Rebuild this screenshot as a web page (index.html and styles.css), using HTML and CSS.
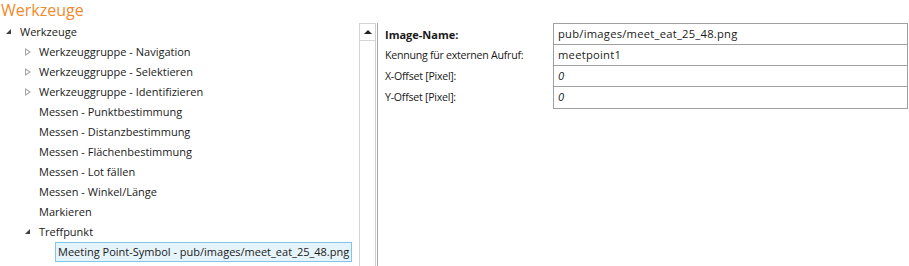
FILE: index.html
```html
<!DOCTYPE html>
<html>
<head>
    <title>Werkzeuge</title>
    <link rel="stylesheet" href="styles.css">
</head>
<body>
    <div class="title">Werkzeuge</div>
    <div class="main">
        <div class="tree">
            <div class="node lvl0"><span class="arrow open"></span>Werkzeuge</div>
            <div class="node lvl1"><span class="arrow closed"></span>Werkzeuggruppe - Navigation</div>
            <div class="node lvl1"><span class="arrow closed"></span>Werkzeuggruppe - Selektieren</div>
            <div class="node lvl1"><span class="arrow closed"></span>Werkzeuggruppe - Identifizieren</div>
            <div class="node lvl1"><span class="arrow"></span>Messen - Punktbestimmung</div>
            <div class="node lvl1"><span class="arrow"></span>Messen - Distanzbestimmung</div>
            <div class="node lvl1"><span class="arrow"></span>Messen - Flächenbestimmung</div>
            <div class="node lvl1"><span class="arrow"></span>Messen - Lot fällen</div>
            <div class="node lvl1"><span class="arrow"></span>Messen - Winkel/Länge</div>
            <div class="node lvl1"><span class="arrow"></span>Markieren</div>
            <div class="node lvl1"><span class="arrow open"></span>Treffpunkt</div>
            <div class="node lvl2"><span class="arrow"></span><span class="selected">Meeting Point-Symbol - pub/images/meet_eat_25_48.png</span></div>
        </div>
        <div class="scrollbar">
            <div class="scroll-up"></div>
        </div>
        <div class="props">
            <div class="prop-label bold">Image-Name:</div>
            <div class="prop-value">pub/images/meet_eat_25_48.png</div>
            <div class="prop-label">Kennung für externen Aufruf:</div>
            <div class="prop-value">meetpoint1</div>
            <div class="prop-label">X-Offset [Pixel]:</div>
            <div class="prop-value italic">0</div>
            <div class="prop-label">Y-Offset [Pixel]:</div>
            <div class="prop-value italic">0</div>
        </div>
    </div>
</body>
</html>
```

FILE: styles.css
```css
body {
    margin: 0;
    font-family: "Open Sans", "Noto Sans", sans-serif;
    font-size: 11px;
    color: #1a1a1a;
    background: #fff;
    width: 909px;
    height: 266px;
    overflow: hidden;
}

.title {
    height: 22px;
    padding-left: 1px;
    font-size: 16px;
    line-height: 21px;
    color: #ef8a2d;
}

.main {
    display: flex;
    height: 244px;
}

/* tree */
.tree {
    width: 359px;
    border-right: 1px solid #d4d4d4;
    margin-top: 1px;
}

.node {
    height: 20px;
    line-height: 20px;
    display: flex;
    align-items: center;
    white-space: nowrap;
    margin-top: -1px;
    margin-bottom: 1px;
}

.lvl0 { padding-left: 4px; }
.lvl1 { padding-left: 23px; }
.lvl2 { padding-left: 42px; }

.arrow {
    width: 16px;
    height: 20px;
    position: relative;
    flex: none;
}

.arrow.closed::before {
    content: '';
    position: absolute;
    left: 2px;
    top: 6px;
    border-left: 6px solid #a6a6a6;
    border-top: 4px solid transparent;
    border-bottom: 4px solid transparent;
}

.arrow.closed::after {
    content: '';
    position: absolute;
    left: 3px;
    top: 8px;
    border-left: 3px solid #fff;
    border-top: 2px solid transparent;
    border-bottom: 2px solid transparent;
}

.arrow.open::before {
    content: '';
    position: absolute;
    left: 2px;
    top: 7px;
    border-right: 5px solid #404040;
    border-top: 5px solid transparent;
}

.selected {
    margin-left: -3px;
    padding: 0 2px 0 2px;
    height: 18px;
    line-height: 18px;
    background: #e5f3fb;
    border: 1px solid #7fc6ec;
}

/* scrollbar */
.scrollbar {
    width: 15px;
    border-right: 1px solid #cfcfcf;
    margin-top: 1px;
}

.scroll-up {
    height: 16px;
    border-top: 1px solid #d4d4d4;
    border-bottom: 1px solid #d4d4d4;
    position: relative;
}

.scroll-up::before {
    content: '';
    position: absolute;
    left: 4px;
    top: 6px;
    border-bottom: 4px solid #222;
    border-left: 4px solid transparent;
    border-right: 4px solid transparent;
}

/* property grid */
.props {
    flex: 1;
    border-left: 1px solid #a8a8a8;
    margin-left: 1px;
    margin-top: 1px;
    display: grid;
    grid-template-columns: 175px 355px;
    grid-auto-rows: 21px;
    align-content: start;
}

.prop-label {
    padding-left: 7px;
    font-size: 10.6px;
    letter-spacing: -0.25px;
    line-height: 23px;
    white-space: nowrap;
}

.prop-label.bold {
    font-size: 11px;
    letter-spacing: 0;
}

.prop-value {
    border: 1px solid #a0a0a0;
    border-bottom: none;
    padding-left: 4px;
    font-size: 11.2px;
    letter-spacing: 0.25px;
    line-height: 20px;
    white-space: nowrap;
}

.props .prop-value:last-child {
    border-bottom: 1px solid #a0a0a0;
    height: 21px;
}

.bold { font-weight: bold; }
.italic { font-style: italic; }
```
